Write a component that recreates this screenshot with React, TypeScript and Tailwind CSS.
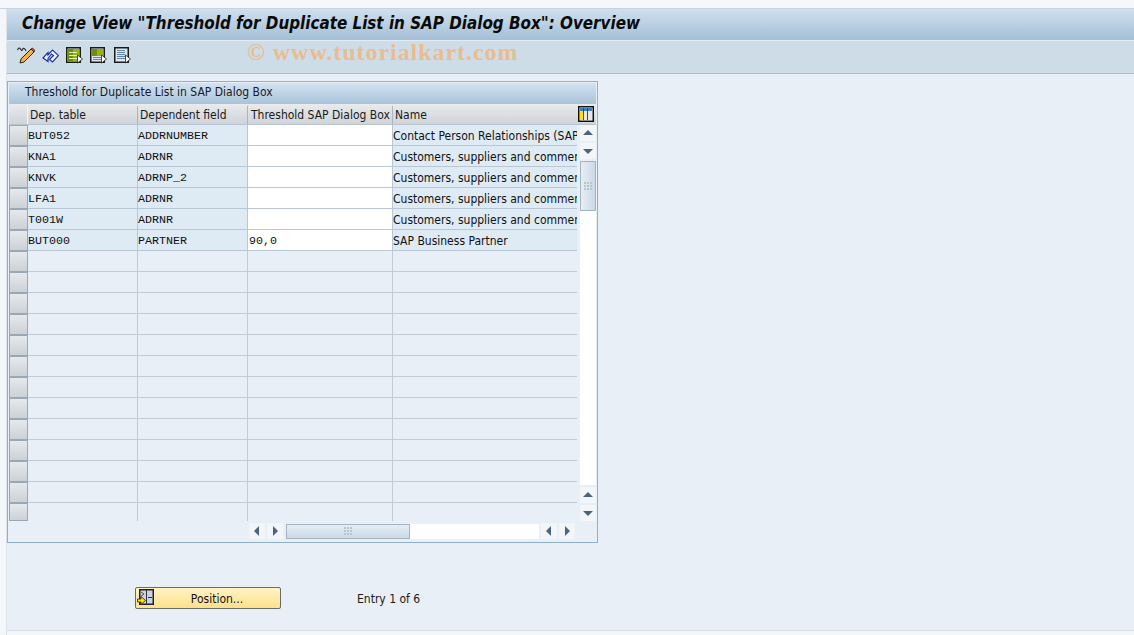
const rows: [string, string, string, string][] = [
  ["BUT052", "ADDRNUMBER", "", "Contact Person Relationships (SAP BP)"],
  ["KNA1", "ADRNR", "", "Customers, suppliers and commercial"],
  ["KNVK", "ADRNP_2", "", "Customers, suppliers and commercial"],
  ["LFA1", "ADRNR", "", "Customers, suppliers and commercial"],
  ["T001W", "ADRNR", "", "Customers, suppliers and commercial"],
  ["BUT000", "PARTNER", "90,0", "SAP Business Partner"],
];
const emptyRows = Array.from({ length: 12 }, (_, i) => i);

function Selector({ h = "h-[21px]" }: { h?: string }) {
  return (
    <div className={`${h} w-[19px] shrink-0 border border-[#9aa8b5] bg-gradient-to-b from-[#e6e9ec] to-[#ccd1d6]`} />
  );
}

function ArrowBtn({ dir }: { dir: "up" | "down" | "left" | "right" }) {
  const p = { up: "M3 10 L8 5 L13 10 Z", down: "M3 6 L13 6 L8 11 Z", left: "M10 3 L10 13 L5 8 Z", right: "M6 3 L6 13 L11 8 Z" }[dir];
  return (
    <div className="w-[16px] h-[16px] bg-[#f3f6f9] shrink-0">
      <svg width="16" height="16" viewBox="0 0 16 16"><path d={p} fill="#4e6478" /></svg>
    </div>
  );
}

function Grip() {
  return (
    <svg width="8" height="8" viewBox="0 0 8 8">
      {[0, 3, 6].map((x) => [0, 3, 6].map((y) => <rect key={`${x}${y}`} x={x} y={y} width="2" height="2" fill="#b9c6d2" />))}
    </svg>
  );
}

function ToolIcon({ kind }: { kind: "all" | "top" | "none" }) {
  const green = kind === "all" ? 12 : kind === "top" ? 7 : 0;
  return (
    <svg width="17" height="17" viewBox="0 0 17 17">
      <rect x="0.75" y="0.75" width="13.5" height="14.5" fill="#dfe7f0" stroke="#1a1a1a" strokeWidth="1.5" />
      {green > 0 && <rect x="2" y="2" width="11" height={green} fill="#6f8f0c" />}
      {green > 0 && <rect x="7" y="2" width="6" height={green} fill="#a4c21e" opacity="0.7" />}
      {(kind === "all" ? [5, 8, 11] : kind === "top" ? [10, 12] : [3, 5, 7, 9, 11]).map((y) => (
        <rect key={y} x="3" y={y} width="8" height="1" fill={kind === "all" ? "#e3eeb0" : "#5f86a8"} />
      ))}
      <path d="M11.5 8 L11.5 16 L16.5 12 Z" fill="#fff" stroke="#222" strokeWidth="0.8" />
    </svg>
  );
}

export default function App() {
  return (
    <div className="w-[1134px] h-[635px] overflow-hidden bg-[#f4f7fa] flex flex-col font-['DejaVu_Sans',sans-serif] [font-stretch:condensed] relative">
      <div className="h-[9px] shrink-0 bg-[#f5f8fb] border-b border-[#c7d3de]" />
      <div className="flex-1 ml-[6px] flex flex-col bg-[#e8eff6] border-l border-[#dce3ea]">
        <div className="h-[31px] shrink-0 pl-[15px] pb-[3px] flex items-center bg-gradient-to-b from-[#cfe0ee] to-[#a4bfd6]">
          <span className="font-bold italic text-[16.86px] leading-none text-[#0a0a0a] whitespace-nowrap">
            Change View "Threshold for Duplicate List in SAP Dialog Box": Overview
          </span>
        </div>
        <div className="h-[34px] shrink-0 flex items-center pl-[10px] pb-[4px] gap-[7px] bg-[#cedce8] border-t border-[#e3ecf3] border-b border-b-[#a9bccc]">
          <svg width="18" height="18" viewBox="0 0 18 18">
            <path d="M4 13 L3 17 L7 16 L17 6 L14 3 Z" fill="#f5b53a" stroke="#222" strokeWidth="1" />
            <path d="M14 3 L17 6 L18 4.5 L15.5 2 Z" fill="#e0503a" stroke="#222" strokeWidth="0.8" />
            <path d="M0.5 4 Q2 0.5 3.5 3 Q5 6 6 2.5 Q7.5 1.5 9 5" fill="none" stroke="#222" strokeWidth="1.1" />
          </svg>
          <svg width="17" height="17" viewBox="0 0 17 17">
            <path d="M1 11 L6 5.5 L6 8 L10.5 3 L16.5 8.5 L10.5 15 L7.5 12.5 L11.5 8.5 L9.5 7 L6 11.5 L6 14.5 Z" fill="#f4f7ff" stroke="#1d2fb0" strokeWidth="1.2" />
          </svg>
          <ToolIcon kind="all" />
          <ToolIcon kind="top" />
          <ToolIcon kind="none" />
        </div>

        <div className="mt-[7px] w-[591px] h-[462px] shrink-0 border border-[#8fb0cc] p-px bg-[#e8eff6]">
          <div className="h-[21px] flex items-center pl-[16px] pb-[3px] text-[12px] text-[#1a1a1a] bg-gradient-to-b from-[#d3e3f0] to-[#a9c3da]">
            Threshold for Duplicate List in SAP Dialog Box
          </div>
          <div className="flex h-[21px] pt-[2px] text-[12px] text-[#1a1a1a] bg-gradient-to-b from-[#e9ebed] to-[#cfd4d9] border-b border-[#b8c4cf]">
            <div className="w-[19px] shrink-0 border-r border-[#f3f5f7] -mt-[2px]" />
            <div className="w-[110px] shrink-0 pl-[2px] flex items-center border-r border-[#aab4be]">Dep. table</div>
            <div className="w-[110px] shrink-0 pl-[2px] flex items-center border-r border-[#aab4be]">Dependent field</div>
            <div className="w-[145px] shrink-0 pl-[3px] flex items-center border-r border-[#aab4be] whitespace-nowrap">Threshold SAP Dialog Box</div>
            <div className="w-[185px] shrink-0 pl-[2px] flex items-center">Name</div>
            <div className="flex-1 flex items-center -mt-[2px]">
              <svg width="16" height="16" viewBox="0 0 16 16">
                <rect x="0.75" y="0.75" width="14.5" height="14.5" fill="#fff" stroke="#111" strokeWidth="1.5" />
                <rect x="2" y="2" width="12" height="3" fill="#3f7fc0" />
                <rect x="2" y="5" width="3" height="9" fill="#ffe000" />
                <rect x="6" y="5" width="3" height="9" fill="#e8e8e8" />
                <rect x="10" y="5" width="4" height="9" fill="#e8e8e8" />
                <rect x="5" y="2" width="1" height="12" fill="#444" />
                <rect x="9" y="2" width="1" height="12" fill="#444" />
              </svg>
            </div>
          </div>

          <div className="flex h-[396px]">
            <div className="w-[568px] shrink-0 flex flex-col">
              {rows.map((r, i) => (
                <div key={i} className="flex h-[21px] shrink-0 text-[#111]">
                  <Selector />
                  <div className="w-[110px] shrink-0 pt-[3px] flex items-center bg-[#deeaf4] border-r border-b border-[#b9c6d3] font-['Liberation_Mono',monospace] [font-stretch:normal] text-[11.67px]">{r[0]}</div>
                  <div className="w-[110px] shrink-0 pt-[3px] flex items-center bg-[#deeaf4] border-r border-b border-[#b9c6d3] font-['Liberation_Mono',monospace] [font-stretch:normal] text-[11.67px]">{r[1]}</div>
                  <div className="w-[145px] shrink-0 pl-[1px] pt-[3px] flex items-center bg-white border-r border-b border-[#b9c6d3] font-['Liberation_Mono',monospace] [font-stretch:normal] text-[11.67px]">{r[2]}</div>
                  <div className="flex-1 min-w-0 pt-[2px] flex items-center overflow-hidden whitespace-nowrap bg-[#deeaf4] border-b border-[#b9c6d3] text-[12px]">{r[3]}</div>
                </div>
              ))}
              {emptyRows.map((i) => (
                <div key={i} className="flex h-[21px] shrink-0">
                  <Selector />
                  <div className="w-[110px] shrink-0 border-r border-b border-[#c0cbd6]" />
                  <div className="w-[110px] shrink-0 border-r border-b border-[#c0cbd6]" />
                  <div className="w-[145px] shrink-0 border-r border-b border-[#c0cbd6]" />
                  <div className="flex-1 border-b border-[#c0cbd6]" />
                </div>
              ))}
              <div className="flex h-[18px] shrink-0">
                <Selector h="h-[18px]" />
                <div className="w-[110px] shrink-0 border-r border-[#c0cbd6]" />
                <div className="w-[110px] shrink-0 border-r border-[#c0cbd6]" />
                <div className="w-[145px] shrink-0 border-r border-[#c0cbd6]" />
              </div>
            </div>
            <div className="w-[16px] ml-[3px] flex flex-col shrink-0">
              <ArrowBtn dir="up" />
              <div className="h-[2px] shrink-0" />
              <ArrowBtn dir="down" />
              <div className="flex-1 bg-white mt-[2px] mb-[2px] flex flex-col">
                <div className="h-[50px] border border-[#a4b4c2] bg-gradient-to-r from-[#e6eef5] to-[#cbd9e5] flex items-center justify-center">
                  <Grip />
                </div>
              </div>
              <ArrowBtn dir="up" />
              <div className="h-[2px] shrink-0" />
              <ArrowBtn dir="down" />
            </div>
          </div>

          <div className="flex items-center h-[16px] mt-[2px] pl-[240px] gap-[2px]">
            <ArrowBtn dir="left" />
            <ArrowBtn dir="right" />
            <div className="w-[253px] h-[15px] ml-[1px] bg-white">
              <div className="w-[124px] h-[15px] border border-[#a4b4c2] bg-gradient-to-b from-[#e6eef5] to-[#cbd9e5] flex items-center justify-center">
                <Grip />
              </div>
            </div>
            <ArrowBtn dir="left" />
            <ArrowBtn dir="right" />
          </div>
        </div>

        <div className="flex items-center mt-[44px] ml-[128px]">
          <button className="w-[146px] h-[22px] pl-[18px] pt-[1px] rounded-[2px] border border-[#6b6b6b] bg-gradient-to-b from-[#fff4c4] to-[#ffe08a] relative flex items-center justify-center text-[12px] text-[#111]">
            <svg className="absolute left-[1px] top-[1px]" width="17" height="17" viewBox="0 0 17 17">
              <rect x="2.75" y="0.75" width="13.5" height="14.5" fill="#c9d2e8" stroke="#222" strokeWidth="1.5" />
              <rect x="9" y="1" width="1" height="14" fill="#333" />
              <rect x="11" y="8" width="4" height="1" fill="#333" />
              <path d="M4 3 L7 5 L4 7" fill="none" stroke="#555" />
              <path d="M0.5 10 H4 V7.5 L8.5 11.5 L4 15.5 V13 H0.5 Z" fill="#ffe000" stroke="#222" strokeWidth="0.8" />
            </svg>
            Position...
          </button>
          <span className="ml-[76px] pt-[1px] text-[12px] text-[#1a1a1a]">Entry 1 of 6</span>
        </div>
        <div className="flex-1" />
        <div className="h-[5px] shrink-0 bg-[#f4f7fa] border-t border-[#d6dde3]" />
      </div>
      <div className="absolute left-[247px] top-[38px] font-['Liberation_Serif',serif] [font-stretch:normal] font-bold text-[24px] leading-[28px] tracking-[0.95px] text-[#e8bd8f] whitespace-nowrap">
        © www.tutorialkart.com
      </div>
    </div>
  );
}
